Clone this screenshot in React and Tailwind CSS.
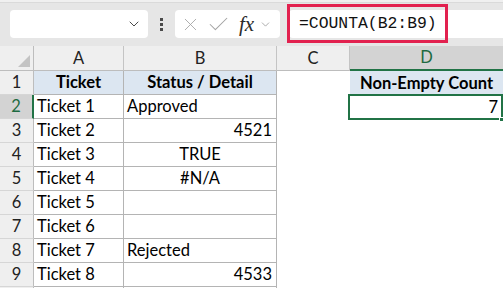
import { ChevronDown, X, Check } from 'lucide-react';

const rows = [
  { n: 1, a: 'Ticket', b: 'Status / Detail', d: 'Non-Empty Count', head: true },
  { n: 2, a: 'Ticket 1', b: 'Approved', bAlign: 'left', d: '7' },
  { n: 3, a: 'Ticket 2', b: '4521', bAlign: 'right' },
  { n: 4, a: 'Ticket 3', b: 'TRUE', bAlign: 'center' },
  { n: 5, a: 'Ticket 4', b: '#N/A', bAlign: 'center' },
  { n: 6, a: 'Ticket 5', b: '' },
  { n: 7, a: 'Ticket 6', b: '' },
  { n: 8, a: 'Ticket 7', b: 'Rejected', bAlign: 'left' },
  { n: 9, a: 'Ticket 8', b: '4533', bAlign: 'right' },
  // row 10 only peeks in by a pixel, its number is not visible
  { n: 10, a: '', b: '', hidden: true },
];

const alignCls = {
  left: 'justify-start pl-[3px]',
  right: 'justify-end pr-[4px]',
  center: 'justify-center',
};

function Toolbar() {
  return (
    <div className="relative h-[46px] bg-[#e6e6e6]">
      <div className="h-[3px] bg-[#f0f0f0] border-b border-[#dadada]" />
      <div className="flex items-start pt-[7px]">
        {/* name box */}
        <div className="ml-[10px] w-[138px] h-[28px] bg-white rounded-[4px] flex items-center justify-end pr-[6px]">
          <ChevronDown size={16} strokeWidth={1.4} className="text-[#3c3c3c]" />
        </div>
        <div className="w-[27px] h-[28px] flex flex-col items-center justify-center gap-[2px]">
          <span className="w-[3px] h-[3px] bg-[#4a4a4a]" />
          <span className="w-[3px] h-[3px] bg-[#4a4a4a]" />
          <span className="w-[3px] h-[3px] bg-[#4a4a4a]" />
        </div>
        {/* cancel / enter / fx */}
        <div className="w-[105px] h-[28px] bg-white rounded-[4px] flex items-center pl-[5px]">
          <X size={21} strokeWidth={1} className="text-[#a3a3a3]" />
          <Check size={25} strokeWidth={1} className="text-[#a3a3a3] ml-[5px]" />
          <span className="ml-[8px] font-['Liberation_Serif'] italic text-[21px] leading-none text-[#2b2b2b]">
            fx
          </span>
          <ChevronDown size={13} strokeWidth={1.3} className="text-[#8a8a8a] ml-[5px]" />
        </div>
        {/* formula bar */}
        <div className="ml-[9px] flex-1 h-[28px] bg-white rounded-l-[4px] flex items-center pl-[10px]">
          <span className="font-['Liberation_Mono'] text-[16.4px] leading-none text-[#111]">=COUNTA(B2:B9)</span>
        </div>
      </div>
      {/* highlight annotation */}
      <div className="absolute left-[287px] top-[4px] w-[161px] h-[39px] border-[3px] border-[#e2214f]" />
    </div>
  );
}

function ColHeader({ label, selected, last }) {
  return (
    <div
      className={`h-[25px] flex items-center justify-center text-[16.5px] border-b ${
        last ? '' : 'border-r border-r-[#c4c4c4]'
      } ${
        selected
          ? 'bg-[#d3d3d3] text-[#1e6b41] border-b-2 border-b-[#217346]'
          : 'bg-[#efefef] text-[#222] border-b-[#bdbdbd]'
      }`}
    >
      {label}
    </div>
  );
}

export default function App() {
  return (
    <div className="w-[503px] h-[288px] overflow-hidden bg-white font-['Lato','Liberation_Sans',sans-serif]">
      <Toolbar />
      <div className="grid grid-cols-[34px_90px_153px_73px_153px] auto-rows-[24px] grid-rows-[25px]">
        {/* corner */}
        <div className="h-[25px] bg-[#efefef] border-r border-b border-[#bdbdbd] relative">
          <div className="absolute right-[3px] bottom-[3px] w-0 h-0 border-l-[12px] border-l-transparent border-b-[12px] border-b-[#c3c3c3]" />
        </div>
        <ColHeader label="A" />
        <ColHeader label="B" />
        <ColHeader label="C" />
        <ColHeader label="D" selected last />

        {rows.map((r) => {
          const sel = r.n === 2;
          return [
            <div
              key={`n${r.n}`}
              className={`flex items-center justify-center text-[16.5px] border-b border-b-[#d6d6d6] ${
                sel
                  ? 'bg-[#d3d3d3] text-[#1e6b41] border-r-2 border-r-[#217346]'
                  : 'bg-[#efefef] text-[#222] border-r border-r-[#bdbdbd]'
              }`}
            >
              {r.hidden ? '' : r.n}
            </div>,
            <div
              key={`a${r.n}`}
              className={`flex items-center text-[16.5px] text-black border-r border-b border-[#b4b4b4] ${
                r.head ? 'bg-[#dce6f1] font-bold justify-center' : 'pl-[3px]'
              }`}
            >
              {r.a}
            </div>,
            <div
              key={`b${r.n}`}
              className={`flex items-center text-[16.5px] text-black border-r border-b border-[#b4b4b4] ${
                r.head ? 'bg-[#dce6f1] font-bold justify-center' : alignCls[r.bAlign || 'left']
              }`}
            >
              {r.b}
            </div>,
            <div key={`c${r.n}`} />,
            <div
              key={`d${r.n}`}
              className={`relative flex items-center text-[16.5px] text-black ${
                r.head ? 'bg-[#dce6f1] font-bold justify-center' : 'justify-end pr-[5px]'
              }`}
            >
              {r.d}
              {sel && (
                <>
                  <div className="absolute -left-[2px] -top-[1px] right-0 -bottom-[1px] border-2 border-[#217346]" />
                  <div className="absolute -right-[1px] -bottom-[3px] w-[5px] h-[5px] bg-[#217346] border border-white" />
                </>
              )}
            </div>,
          ];
        })}
      </div>
    </div>
  );
}
